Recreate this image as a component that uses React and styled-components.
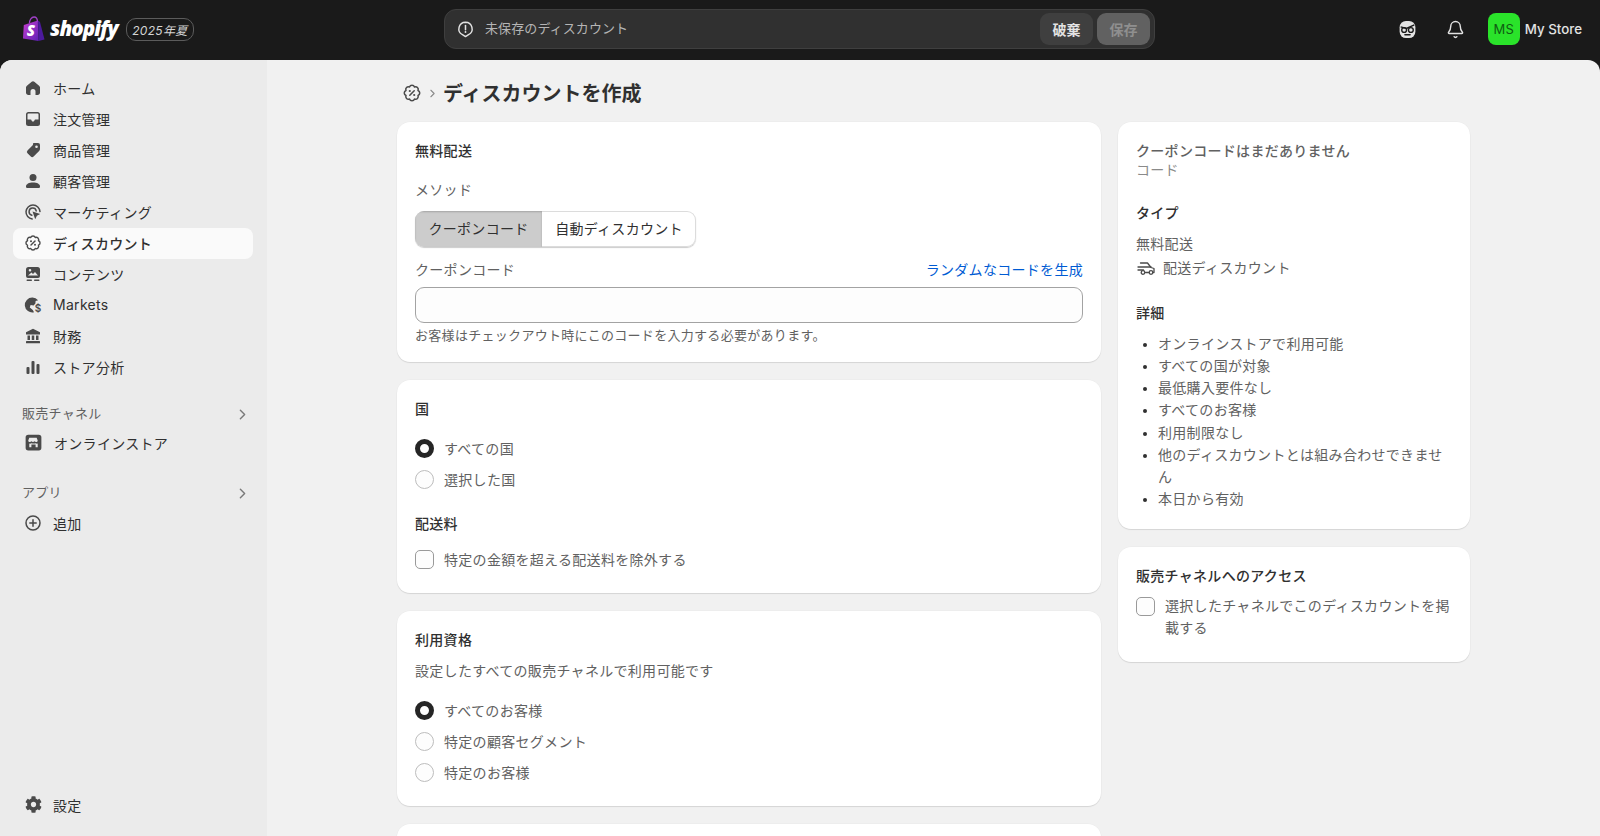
import React from 'react';
import styled, { createGlobalStyle } from 'styled-components';
import { Bell, ChevronRight } from 'lucide-react';
import { FaCog } from 'react-icons/fa';

const Global = createGlobalStyle`
  html, body {
    margin: 0;
    height: 100%;
    overflow: hidden;
    background: #1a1a1a;
    font-family: Inter, "Noto Sans CJK JP", sans-serif;
    font-size: 14px;
    letter-spacing: 0.3px;
    color: #303030;
  }
  * { box-sizing: border-box; }
`;

const Page = styled.div`
  height: 836px;
  display: flex;
  flex-direction: column;
`;

/* top bar */
const TopBar = styled.header`
  height: 60px;
  flex: none;
  padding-bottom: 2px;
  display: grid;
  grid-template-columns: 444px 711px 1fr;
  align-items: center;
  background: #1a1a1a;
`;
const Brand = styled.div`
  display: flex;
  align-items: center;
  padding-left: 23px;
`;
const Wordmark = styled.span`
  margin: -3px 0 0 5px;
  font-family: "Open Sans", sans-serif;
  font-size: 20.500px;
  font-weight: 800;
  font-style: italic;
  letter-spacing: -0.9px;
  color: #fff;
`;
const SeasonBadge = styled.span`
  margin-left: 8px;
  width: 68px;
  height: 23px;
  display: flex;
  align-items: center;
  justify-content: center;
  border: 1px solid #5c5c5c;
  border-radius: 10px;
  font-size: 12px;
  font-style: italic;
  color: #d4d4d4;
`;
const UnsavedBar = styled.div`
  height: 40px;
  display: flex;
  align-items: center;
  padding: 0 4px 0 11px;
  gap: 4px;
  background: #303030;
  border: 1px solid #3f3f3f;
  border-radius: 12px;
`;
const UnsavedText = styled.span`
  flex: 1;
  margin: 0 0 3px 6px;
  font-size: 13px;
  letter-spacing: 0.1px;
  color: #b5b5b5;
`;
const BarButton = styled.button`
  width: 53px;
  height: 32px;
  border: 0;
  border-radius: 9px;
  font: 600 14px Inter, "Noto Sans CJK JP", sans-serif;
  background: ${p => (p.$muted ? '#616161' : '#3f3f3f')};
  color: ${p => (p.$muted ? '#8f8f8f' : '#e3e3e3')};
`;
const TopRight = styled.div`
  display: flex;
  align-items: center;
  justify-content: flex-end;
  padding-right: 18px;
  color: #e3e3e3;
`;
const TopIcon = styled.span`
  display: flex;
  margin-right: ${p => p.$gap}px;
`;
const Avatar = styled.span`
  width: 32px;
  height: 32px;
  display: flex;
  align-items: center;
  justify-content: center;
  border-radius: 8px;
  background: #2ae32a;
  color: #0f5c12;
  font-size: 13px;
`;
const StoreName = styled.span`
  margin-left: 5px;
  font-size: 13.300px;
  font-weight: 500;
  letter-spacing: 0;
  color: #e3e3e3;
`;

/* body */
const Body = styled.div`
  flex: 1;
  min-height: 0;
  display: flex;
  overflow: hidden;
  border-radius: 12px 12px 0 0;
  background: #f1f1f1;
`;
const Sidebar = styled.nav`
  width: 267px;
  flex: none;
  display: flex;
  flex-direction: column;
  padding: 13px 14px 15px 13px;
  background: #ebebeb;
`;
const NavItem = styled.a`
  height: 31px;
  display: flex;
  align-items: center;
  gap: 10px;
  padding: 0 0 2px 10px;
  border-radius: 8px;
  font-size: 14px;
  font-weight: ${p => (p.$active ? 500 : 400)};
  color: #303030;
  background: ${p => (p.$active ? '#fafafa' : 'transparent')};
  margin-top: ${p => p.$top || 0}px;
  ${p => p.$bottom && 'margin-top: auto;'}
  svg { flex: none; color: #4a4a4a; }
`;
const NavSection = styled.div`
  height: 28px;
  margin-top: ${p => p.$top}px;
  display: flex;
  align-items: center;
  justify-content: space-between;
  padding: 0 2px 2px 9px;
  font-size: 13px;
  color: #616161;
  svg { margin-top: 5px; color: #7a7a7a; }
`;
const Main = styled.main`
  flex: 1;
  min-width: 0;
  padding: 16px 130px 0;
`;
const PageHeader = styled.div`
  height: 34px;
  margin-bottom: 12px;
  display: flex;
  align-items: center;
  padding-left: 4px;
  color: #4a4a4a;
`;
const Title = styled.h1`
  margin: 0 0 2px 4px;
  font-size: 20px;
  font-weight: 600;
  letter-spacing: 0;
  color: #303030;
`;
const Columns = styled.div`
  display: grid;
  grid-template-columns: 704px 352px;
  gap: 17px;
  align-items: start;
`;
const Stack = styled.div`
  display: flex;
  flex-direction: column;
  gap: 18px;
`;
const Card = styled.section`
  display: flex;
  flex-direction: column;
  padding: 18px 18px 0;
  height: ${p => p.$h}px;
  background: #fff;
  border-radius: 13px;
  box-shadow: 0 1px 1px rgba(0, 0, 0, 0.1), 0 0 0 0.5px rgba(0, 0, 0, 0.03);
  & > * { flex: none; }
`;
const Heading = styled.h2`
  margin: ${p => p.$top || 0}px 0 ${p => p.$bottom || 0}px;
  font-size: 14px;
  line-height: 22px;
  font-weight: 500;
  color: ${p => p.$color || '#303030'};
`;
const Muted = styled.div`
  margin: ${p => p.$top || 0}px 0 ${p => p.$bottom || 0}px;
  font-size: ${p => p.$size || 14}px;
  line-height: ${p => p.$line || 22}px;
  color: ${p => p.$color || '#616161'};
`;
const Segments = styled.div`
  width: 281px;
  height: 36px;
  margin: 10px 0 12px;
  display: flex;
  border-radius: 9px;
  overflow: hidden;
  box-shadow: inset 0 0 0 1px #dcdcdc, 0 1px 1px rgba(0, 0, 0, 0.2);
`;
const Segment = styled.div`
  flex: ${p => (p.$on ? '0 0 127px' : 1)};
  display: flex;
  align-items: center;
  justify-content: center;
  padding-bottom: 2px;
  font-size: 14px;
  background: ${p => (p.$on ? '#cccccc' : 'transparent')};
  color: #303030;
  box-shadow: ${p => (p.$on ? 'inset 0 1px 2px rgba(0, 0, 0, 0.2)' : 'none')};
`;
const FieldRow = styled.div`
  display: flex;
  justify-content: space-between;
  line-height: 22px;
  color: #616161;
`;
const Link = styled.a`
  color: #005bd3;
`;
const Input = styled.div`
  height: 36px;
  margin: 6px 0 1px;
  border: 1px solid #a3a3a3;
  border-radius: 9px;
  background: #fdfdfd;
`;
const Choice = styled.label`
  min-height: 31px;
  display: flex;
  align-items: ${p => (p.$top ? 'flex-start' : 'center')};
  gap: 10px;
  line-height: 22px;
  color: #616161;
`;
const Radio = styled.span`
  width: 19px;
  height: 19px;
  flex: none;
  border-radius: 50%;
  background: #fdfdfd;
  border: ${p => (p.$on ? '5px solid #252525' : '1px solid #bdbdbd')};
`;
const Check = styled.span`
  width: 19px;
  height: 19px;
  flex: none;
  margin-top: ${p => (p.$top ? '2px' : 0)};
  border-radius: 5px;
  background: #fdfdfd;
  border: 1px solid #9a9a9a;
`;
const TypeRow = styled.div`
  display: flex;
  align-items: center;
  gap: 6px;
  line-height: 25px;
  color: #616161;
`;
const Bullets = styled.ul`
  margin: 9px 0 0;
  padding-left: 22px;
  font-size: 14px;
  line-height: 22.150px;
  color: #616161;
  li::marker { color: #303030; font-size: 12px; }
`;

/* icons */
const Svg = ({ size = 20, children, ...rest }) => (
  <svg width={size} height={size} viewBox="0 0 20 20" fill="currentColor" {...rest}>{children}</svg>
);

const badgePath = (() => {
  let d = '';
  const n = 8;
  for (let i = 0; i <= n; i++) {
    const a = (i / n) * Math.PI * 2 - Math.PI / 2 + Math.PI / 8;
    const x = (10 + 5.900 * Math.cos(a)).toFixed(2);
    const y = (10 + 5.900 * Math.sin(a)).toFixed(2);
    d += i === 0 ? `M${x} ${y}` : `A2.400 2.400 0 0 1 ${x} ${y}`;
  }
  return d + 'Z';
})();

const DiscountIcon = ({ size }) => (
  <Svg size={size}>
    <path d={badgePath} fill="none" stroke="currentColor" strokeWidth="1.400" strokeLinejoin="round" />
    <path d="M8 12l4-4" stroke="currentColor" strokeWidth="1.400" strokeLinecap="round" />
    <circle cx="8" cy="8.200" r="1" />
    <circle cx="12" cy="11.800" r="1" />
  </Svg>
);
const HomeIcon = () => (
  <Svg>
    <path d="M10 3.200c-.5 0-.9.2-1.300.5L4.200 7.400c-.7.5-1.200 1.300-1.200 2.200V14.500C3 16 4 17 5.500 17H7.500v-3.500a2.500 2.500 0 0 1 5 0V17h2c1.500 0 2.500-1 2.500-2.500V9.600c0-.9-.5-1.700-1.200-2.200l-4.500-3.700c-.4-.3-.8-.5-1.300-.5z" />
  </Svg>
);
const OrdersIcon = () => (
  <Svg>
    <path fillRule="evenodd" d="M5.500 3h9A2.500 2.500 0 0 1 17 5.500v9a2.500 2.500 0 0 1-2.500 2.500h-9A2.500 2.500 0 0 1 3 14.500v-9A2.500 2.500 0 0 1 5.500 3zM5.500 4.500a1 1 0 0 0-1 1V10.500h3.200a.8.8 0 0 1 .8.7c.1.800.700 1.300 1.500 1.300s1.400-.5 1.500-1.300a.8.8 0 0 1 .8-.7h3.200V5.500a1 1 0 0 0-1-1z" />
  </Svg>
);
const TagIcon = () => (
  <Svg>
    <path fillRule="evenodd" d="M11 3h4a2 2 0 0 1 2 2v4c0 .8-.3 1.500-.9 2.100l-5.500 5.400a2 2 0 0 1-2.800 0l-3.300-3.300a2 2 0 0 1 0-2.800l5.400-5.500C10 3.300 10.300 3 11 3zM13.500 8a1.300 1.300 0 1 0 0-2.600 1.300 1.300 0 0 0 0 2.600z" />
  </Svg>
);
const PersonIcon = () => (
  <Svg>
    <circle cx="10" cy="6.500" r="3.500" />
    <path d="M3 15.500c0-2.500 3-4 7-4s7 1.500 7 4c0 1-.7 1.500-1.500 1.500h-11C3.700 17 3 16.500 3 15.500z" />
  </Svg>
);
const MarketingIcon = () => (
  <Svg>
    <path d="M9.200 17a7 7 0 1 1 7.800-7.400" fill="none" stroke="currentColor" strokeWidth="1.500" strokeLinecap="round" />
    <path d="M8.800 13.200a3.600 3.600 0 1 1 4.400-4.300" fill="none" stroke="currentColor" strokeWidth="1.500" strokeLinecap="round" />
    <path d="M9.500 9.500l7.700 2.600-3.300 1.700-1.700 3.400z" />
  </Svg>
);
const ContentIcon = () => (
  <Svg>
    <path fillRule="evenodd" d="M5.500 3h9A2.500 2.500 0 0 1 17 5.500V12a2 2 0 0 1-2 2H5a2 2 0 0 1-2-2V5.500A2.500 2.500 0 0 1 5.500 3zM5 11.500h10l-3-3.500-2 2-1.500-1.500zM7 7.500a1.300 1.300 0 1 0 0-2.600 1.300 1.300 0 0 0 0 2.600z" />
    <rect x="3.500" y="15.500" width="5.500" height="1.500" rx=".7" />
    <rect x="11" y="15.500" width="5.500" height="1.500" rx=".7" />
  </Svg>
);
const MarketsIcon = () => (
  <Svg>
    <path d="M9.500 2.500a7.500 7.500 0 1 0 1.500 14.800l-1.200-2.200-3-2.600.8-2.500 3 .6 1.800-2 .2-2.600 2.500-.8A7.500 7.500 0 0 0 9.500 2.500z" />
    <text x="11.800" y="17" fontSize="10" fontWeight="600" fontFamily="Inter, sans-serif">$</text>
  </Svg>
);
const FinanceIcon = () => (
  <Svg>
    <path d="M10 2.800l7 3.400V8.500H3V6.200z" />
    <rect x="4.500" y="9.500" width="2.500" height="4.500" />
    <rect x="8.750" y="9.500" width="2.500" height="4.500" />
    <rect x="13" y="9.500" width="2.500" height="4.500" />
    <rect x="3" y="15" width="14" height="2.200" rx=".5" />
  </Svg>
);
const AnalyticsIcon = () => (
  <Svg>
    <rect x="3.500" y="10" width="3" height="7" rx="1" />
    <rect x="8.500" y="4" width="3" height="13" rx="1" />
    <rect x="13.500" y="7" width="3" height="10" rx="1" />
  </Svg>
);
const StoreIcon = () => (
  <Svg size={21}>
    <path fillRule="evenodd" d="M5 2.500h10A2.500 2.500 0 0 1 17.500 5v10a2.500 2.500 0 0 1-2.500 2.500H5A2.500 2.500 0 0 1 2.500 15V5A2.500 2.500 0 0 1 5 2.500zM6 5.500l-1 2.500c0 1 .8 1.500 1.600 1.500.6 0 1-.2 1.400-.7.4.5.900.7 1.500.7s1.100-.2 1.500-.7c.4.5.8.7 1.400.7.8 0 1.600-.5 1.600-1.500l-1-2.500zM6 11v3.500h2V12h4v2.500h2V11c-.8.2-1.600 0-2-.4-.6.500-2.800.5-4 0-.4.400-1.200.6-2 .4z" />
  </Svg>
);
const AddIcon = () => (
  <Svg>
    <circle cx="10" cy="10" r="7" fill="none" stroke="currentColor" strokeWidth="1.500" />
    <path d="M10 6.800v6.400M6.800 10h6.400" stroke="currentColor" strokeWidth="1.500" strokeLinecap="round" />
  </Svg>
);
const AlertIcon = () => (
  <Svg size={19} style={{ color: '#e3e3e3', flex: 'none' }}>
    <path d="M10 2.300a7 7 0 0 1 3.200 13.200L10 17.500l-3.200-2A7 7 0 0 1 10 2.300z" fill="none" stroke="currentColor" strokeWidth="1.500" strokeLinejoin="round" />
    <path d="M10 5.800v4.400" stroke="currentColor" strokeWidth="1.600" strokeLinecap="round" />
    <circle cx="10" cy="12.700" r="1" />
  </Svg>
);
const SidekickIcon = () => (
  <Svg size={21}>
    <rect x="2.500" y="1.800" width="15" height="16.400" rx="6" />
    <path d="M3.500 7.500L9 9l7.500-3.500" fill="none" stroke="#1a1a1a" strokeWidth="1.300" />
    <circle cx="6.800" cy="10.500" r="2.300" fill="none" stroke="#1a1a1a" strokeWidth="1.300" />
    <circle cx="13.200" cy="10.500" r="2.300" fill="none" stroke="#1a1a1a" strokeWidth="1.300" />
    <path d="M7.500 15h5" stroke="#1a1a1a" strokeWidth="1.300" strokeLinecap="round" />
  </Svg>
);
const TruckIcon = () => (
  <svg width="21" height="20" viewBox="0 0 21 20" fill="none" stroke="#4a4a4a" strokeWidth="1.300" strokeLinecap="round" strokeLinejoin="round">
    <path d="M4.500 5H11.500L15 9.500l3 1V14.500h-1" />
    <path d="M2 9H15M2 12H7.500M9.500 14.500H13" />
    <circle cx="7" cy="14.500" r="1.800" />
    <circle cx="15" cy="14.500" r="1.800" />
  </svg>
);
const ShopifyBag = () => (
  <svg width="22" height="26" viewBox="0 0 22 26">
    <defs>
      <linearGradient id="bag" x1="0" y1="0" x2="1" y2="1">
        <stop offset="0" stopColor="#c83fd0" />
        <stop offset="1" stopColor="#5f1fb5" />
      </linearGradient>
    </defs>
    <path d="M6.500 7c0-3 2-6 4.500-6s3.500 2 3.500 5" fill="none" stroke="#a040c8" strokeWidth="1.300" />
    <path d="M15 4.500l2 1.500L21.500 23.500 15.500 25z" fill="#4c1a9c" />
    <path d="M14.800 4.500L.8 9 0 22.500 15.500 25z" fill="url(#bag)" />
    <text x="3.800" y="20" fontSize="15" fontWeight="800" fontStyle="italic" fill="#fff" fontFamily="Open Sans, sans-serif">S</text>
  </svg>
);

const navTop = [
  [HomeIcon, 'ホーム'],
  [OrdersIcon, '注文管理'],
  [TagIcon, '商品管理'],
  [PersonIcon, '顧客管理'],
  [MarketingIcon, 'マーケティング'],
  [DiscountIcon, 'ディスカウント', true],
  [ContentIcon, 'コンテンツ'],
  [MarketsIcon, 'Markets'],
  [FinanceIcon, '財務'],
  [AnalyticsIcon, 'ストア分析'],
];

const details = [
  'オンラインストアで利用可能',
  'すべての国が対象',
  '最低購入要件なし',
  'すべてのお客様',
  '利用制限なし',
  '他のディスカウントとは組み合わせできません',
  '本日から有効',
];

export default function App() {
  return (
    <Page>
      <Global />
      <TopBar>
        <Brand>
          <ShopifyBag />
          <Wordmark>shopify</Wordmark>
          <SeasonBadge>2025年夏</SeasonBadge>
        </Brand>
        <UnsavedBar>
          <AlertIcon />
          <UnsavedText>未保存のディスカウント</UnsavedText>
          <BarButton>破棄</BarButton>
          <BarButton $muted>保存</BarButton>
        </UnsavedBar>
        <TopRight>
          <TopIcon $gap={28}><SidekickIcon /></TopIcon>
          <TopIcon $gap={23}><Bell size={19} strokeWidth={1.800} /></TopIcon>
          <Avatar>MS</Avatar>
          <StoreName>My Store</StoreName>
        </TopRight>
      </TopBar>
      <Body>
        <Sidebar>
          {navTop.map(([Icon, label, active]) => (
            <NavItem key={label} $active={active}>
              <Icon />
              {label}
            </NavItem>
          ))}
          <NavSection $top={16}>販売チャネル<ChevronRight size={17} /></NavSection>
          <NavItem $top={1}><StoreIcon />オンラインストア</NavItem>
          <NavSection $top={19}>アプリ<ChevronRight size={17} /></NavSection>
          <NavItem $top={2}><AddIcon />追加</NavItem>
          <NavItem $bottom><FaCog size={17} style={{ margin: '0 1.500px' }} />設定</NavItem>
        </Sidebar>
        <Main>
          <PageHeader>
            <DiscountIcon size={22} />
            <ChevronRight size={13} style={{ marginLeft: 3, color: '#8a8a8a' }} />
            <Title>ディスカウントを作成</Title>
          </PageHeader>
          <Columns>
            <Stack>
              <Card $h={240}>
                <Heading>無料配送</Heading>
                <Muted $top={17}>メソッド</Muted>
                <Segments>
                  <Segment $on>クーポンコード</Segment>
                  <Segment>自動ディスカウント</Segment>
                </Segments>
                <FieldRow>
                  <span>クーポンコード</span>
                  <Link>ランダムなコードを生成</Link>
                </FieldRow>
                <Input />
                <Muted $size={13}>お客様はチェックアウト時にこのコードを入力する必要があります。</Muted>
              </Card>
              <Card $h={213}>
                <Heading $bottom={13}>国</Heading>
                <Choice><Radio $on />すべての国</Choice>
                <Choice><Radio />選択した国</Choice>
                <Heading $top={18} $bottom={9}>配送料</Heading>
                <Choice><Check />特定の金額を超える配送料を除外する</Choice>
              </Card>
              <Card $h={195}>
                <Heading>利用資格</Heading>
                <Muted $top={9} $bottom={13}>設定したすべての販売チャネルで利用可能です</Muted>
                <Choice><Radio $on />すべてのお客様</Choice>
                <Choice><Radio />特定の顧客セグメント</Choice>
                <Choice><Radio />特定のお客様</Choice>
              </Card>
              <Card $h={120} />
            </Stack>
            <Stack>
              <Card $h={407}>
                <Heading $color="#616161">クーポンコードはまだありません</Heading>
                <Muted $color="#8a8a8a" $line={16}>コード</Muted>
                <Heading $top={24}>タイプ</Heading>
                <Muted $top={9}>無料配送</Muted>
                <TypeRow><TruckIcon />配送ディスカウント</TypeRow>
                <Heading $top={22}>詳細</Heading>
                <Bullets>
                  {details.map(d => <li key={d}>{d}</li>)}
                </Bullets>
              </Card>
              <Card $h={115}>
                <Heading $bottom={8}>販売チャネルへのアクセス</Heading>
                <Choice $top><Check $top />選択したチャネルでこのディスカウントを掲載する</Choice>
              </Card>
            </Stack>
          </Columns>
        </Main>
      </Body>
    </Page>
  );
}
